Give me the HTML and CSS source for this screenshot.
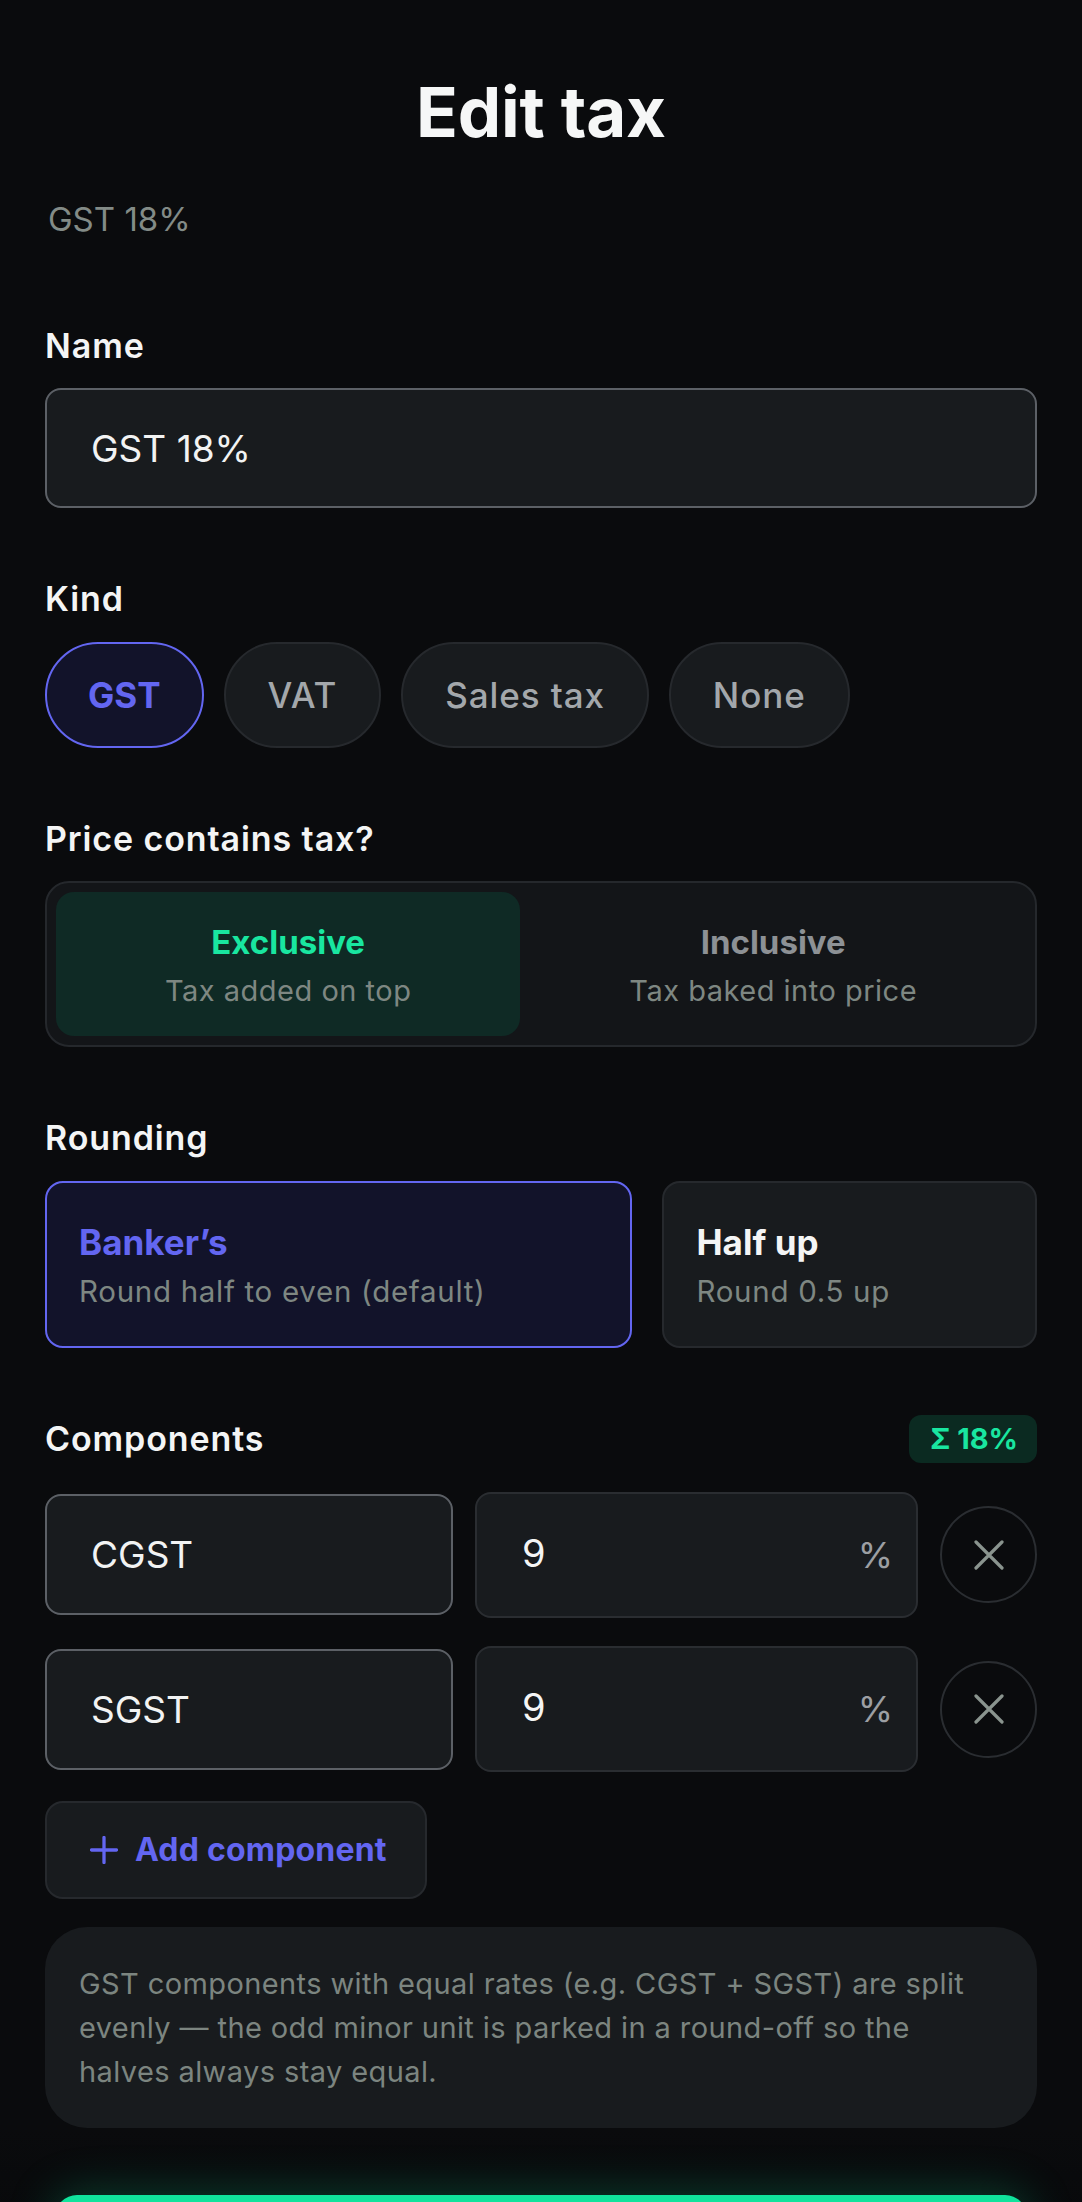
FILE: index.html
```html
<!DOCTYPE html>
<html lang="en">
<head>
<meta charset="utf-8">
<title>Edit tax</title>
<link rel="stylesheet" href="styles.css">
</head>
<body>
<main class="page">
  <h1 class="title">Edit tax</h1>
  <p class="subtitle">GST 18%</p>

  <section class="field field-first">
    <div class="label">Name</div>
    <div class="input">GST 18%</div>
  </section>

  <section class="field">
    <div class="label">Kind</div>
    <div class="chips">
      <div class="chip chip-on">GST</div>
      <div class="chip">VAT</div>
      <div class="chip">Sales tax</div>
      <div class="chip">None</div>
    </div>
  </section>

  <section class="field">
    <div class="label">Price contains tax?</div>
    <div class="segment">
      <div class="seg-opt seg-on">
        <div class="seg-title">Exclusive</div>
        <div class="seg-sub">Tax added on top</div>
      </div>
      <div class="seg-opt">
        <div class="seg-title">Inclusive</div>
        <div class="seg-sub">Tax baked into price</div>
      </div>
    </div>
  </section>

  <section class="field">
    <div class="label">Rounding</div>
    <div class="cards">
      <div class="card card-on">
        <div class="card-title">Banker’s</div>
        <div class="card-sub">Round half to even (default)</div>
      </div>
      <div class="card">
        <div class="card-title">Half up</div>
        <div class="card-sub">Round 0.5 up</div>
      </div>
    </div>
  </section>

  <section class="components">
    <div class="comp-head">
      <div class="label">Components</div>
      <div class="badge">Σ 18%</div>
    </div>
    <div class="rows">
      <div class="row">
        <div class="comp-name">CGST</div>
        <div class="comp-rate"><span class="rate-val">9</span><span class="rate-unit">%</span></div>
        <div class="remove">
          <svg viewBox="0 0 30 30" width="30" height="30"><path d="M2 2 L28 28 M28 2 L2 28" fill="none" stroke="#8a948e" stroke-width="3.2" stroke-linecap="round"/></svg>
        </div>
      </div>
      <div class="row">
        <div class="comp-name">SGST</div>
        <div class="comp-rate"><span class="rate-val">9</span><span class="rate-unit">%</span></div>
        <div class="remove">
          <svg viewBox="0 0 30 30" width="30" height="30"><path d="M2 2 L28 28 M28 2 L2 28" fill="none" stroke="#8a948e" stroke-width="3.2" stroke-linecap="round"/></svg>
        </div>
      </div>
    </div>
    <div class="add-btn">
      <svg viewBox="0 0 28 28" width="28" height="28"><path d="M14 1.5 V26.5 M1.5 14 H26.5" fill="none" stroke="#6366f1" stroke-width="3.3" stroke-linecap="round"/></svg>
      <span>Add component</span>
    </div>
    <div class="note">GST components with equal rates (e.g. CGST + SGST) are split evenly — the odd minor unit is parked in a round-off so the<br>halves always stay equal.</div>
  </section>

  <footer class="footer">
    <div class="save" aria-label="Save"></div>
  </footer>
</main>
</body>
</html>
```

FILE: styles.css
```css
* { box-sizing: border-box; }

html, body {
  margin: 0;
  padding: 0;
  background: #0a0b0d;
}

body {
  font-family: "Inter", "Noto Sans", sans-serif;
  color: #f4f5f5;
  min-height: 2202px;
}

.page {
  display: flex;
  flex-direction: column;
  padding: 71px 45px 0;
}

.title {
  margin: 0;
  text-align: center;
  font-size: 69px;
  line-height: 83px;
  font-weight: 700;
  letter-spacing: -0.2px;
  color: #f6f7f7;
}

.subtitle {
  margin: 45px 0 0;
  padding-left: 3px;
  font-size: 33px;
  line-height: 40px;
  color: #838b87;
}

.field {
  display: flex;
  flex-direction: column;
  gap: 21.5px;
  margin-top: 70px;
}

.field-first { margin-top: 85.5px; }

.label {
  font-size: 34px;
  line-height: 42px;
  font-weight: 600;
  letter-spacing: 0.9px;
  color: #f4f5f5;
}

.input {
  height: 120px;
  display: flex;
  align-items: center;
  padding: 0 44px;
  background: #181b1e;
  border: 2px solid #5c6066;
  border-radius: 16px;
  font-size: 37px;
  color: #f2f3f3;
}

/* chips */
.chips {
  display: flex;
  gap: 20px;
}

.chip {
  height: 106px;
  display: flex;
  align-items: center;
  padding: 0 42px;
  background: #181b1e;
  border: 2px solid #26292d;
  border-radius: 999px;
  font-size: 35px;
  font-weight: 500;
  letter-spacing: 0.9px;
  color: #a3a7ab;
}

.chip-on {
  background: #12132a;
  border-color: #6366f1;
  color: #6366f1;
  font-weight: 700;
  letter-spacing: 0;
  padding: 0 41px;
}

/* segmented */
.segment {
  height: 166px;
  display: flex;
  padding: 9px;
  background: #131518;
  border: 2px solid #25282c;
  border-radius: 24px;
}

.seg-opt {
  flex: 1 1 auto;
  display: flex;
  flex-direction: column;
  align-items: center;
  justify-content: center;
  gap: 9px;
  padding: 5px 20px 0;
  border-radius: 18px;
}

.seg-on { background: #0f2a25; }

.seg-title {
  font-size: 33px;
  line-height: 40px;
  font-weight: 700;
  color: #8d9195;
}

.seg-on .seg-title { color: #19e6a0; }

.seg-sub {
  font-size: 29px;
  line-height: 40px;
  letter-spacing: 0.5px;
  color: #7e8782;
}

/* rounding cards */
.cards {
  display: flex;
  gap: 30px;
}

.card {
  flex: 1 1 auto;
  height: 167px;
  display: flex;
  flex-direction: column;
  justify-content: center;
  gap: 9px;
  padding: 5px 32px 0;
  background: #181b1e;
  border: 2px solid #26292d;
  border-radius: 18px;
}

.card-on {
  background: #12132a;
  border-color: #6366f1;
}

.card-title {
  font-size: 35px;
  line-height: 40px;
  font-weight: 700;
  color: #f4f5f5;
}

.card-on .card-title { color: #6366f1; }

.card-sub {
  font-size: 29.5px;
  line-height: 40px;
  letter-spacing: 0.7px;
  color: #7e8782;
}

/* components */
.components {
  display: flex;
  flex-direction: column;
  margin-top: 67px;
}

.comp-head {
  height: 48px;
  display: flex;
  align-items: center;
  justify-content: space-between;
}

.badge {
  height: 48px;
  display: flex;
  align-items: center;
  padding: 0 19px 0 21px;
  background: #0b2a21;
  border-radius: 12px;
  font-size: 29px;
  font-weight: 700;
  color: #19e6a0;
}

.rows {
  display: flex;
  flex-direction: column;
  gap: 28.5px;
  margin-top: 29px;
}

.row {
  display: grid;
  grid-template-columns: minmax(0, 408fr) minmax(0, 443fr) 97px;
  gap: 22px;
  align-items: center;
}

.comp-name {
  height: 121px;
  display: flex;
  align-items: center;
  padding: 0 44px;
  background: #181b1e;
  border: 2px solid #5c6066;
  border-radius: 16px;
  font-size: 37px;
  color: #f2f3f3;
}

.comp-rate {
  height: 126px;
  display: flex;
  align-items: center;
  justify-content: space-between;
  padding: 0 23px 0 45px;
  background: #181b1e;
  border: 2px solid #2a2d31;
  border-radius: 16px;
}

.rate-val {
  font-size: 38px;
  color: #f4f5f5;
  margin-top: -4px;
}

.rate-unit {
  font-size: 36px;
  color: #9c9fa3;
}

.remove {
  width: 97px;
  height: 97px;
  display: flex;
  align-items: center;
  justify-content: center;
  border: 2px solid #2a2d31;
  border-radius: 50%;
}

.add-btn {
  align-self: flex-start;
  height: 98px;
  display: flex;
  align-items: center;
  gap: 17px;
  margin-top: 28.5px;
  padding: 0 38px 0 43px;
  background: #181b1e;
  border: 2px solid #26292d;
  border-radius: 18px;
  font-size: 32px;
  font-weight: 700;
  letter-spacing: 0.2px;
  color: #6366f1;
}

.note {
  margin-top: 28.5px;
  padding: 35px 34px 34px;
  background: #181b1e;
  border-radius: 42px;
  font-size: 29px;
  line-height: 44px;
  letter-spacing: 0.4px;
  color: #7c8580;
}

/* footer */
.footer {
  margin: 0 -45px;
  padding: 67px 55px 40px;
  background: linear-gradient(to bottom, rgba(8, 9, 11, 0) 0%, #08090b 45%);
}

.save {
  height: 110px;
  background: #10e39c;
  border-radius: 22px;
  box-shadow: 0 0 48px rgba(16, 227, 156, 0.28);
}
```
